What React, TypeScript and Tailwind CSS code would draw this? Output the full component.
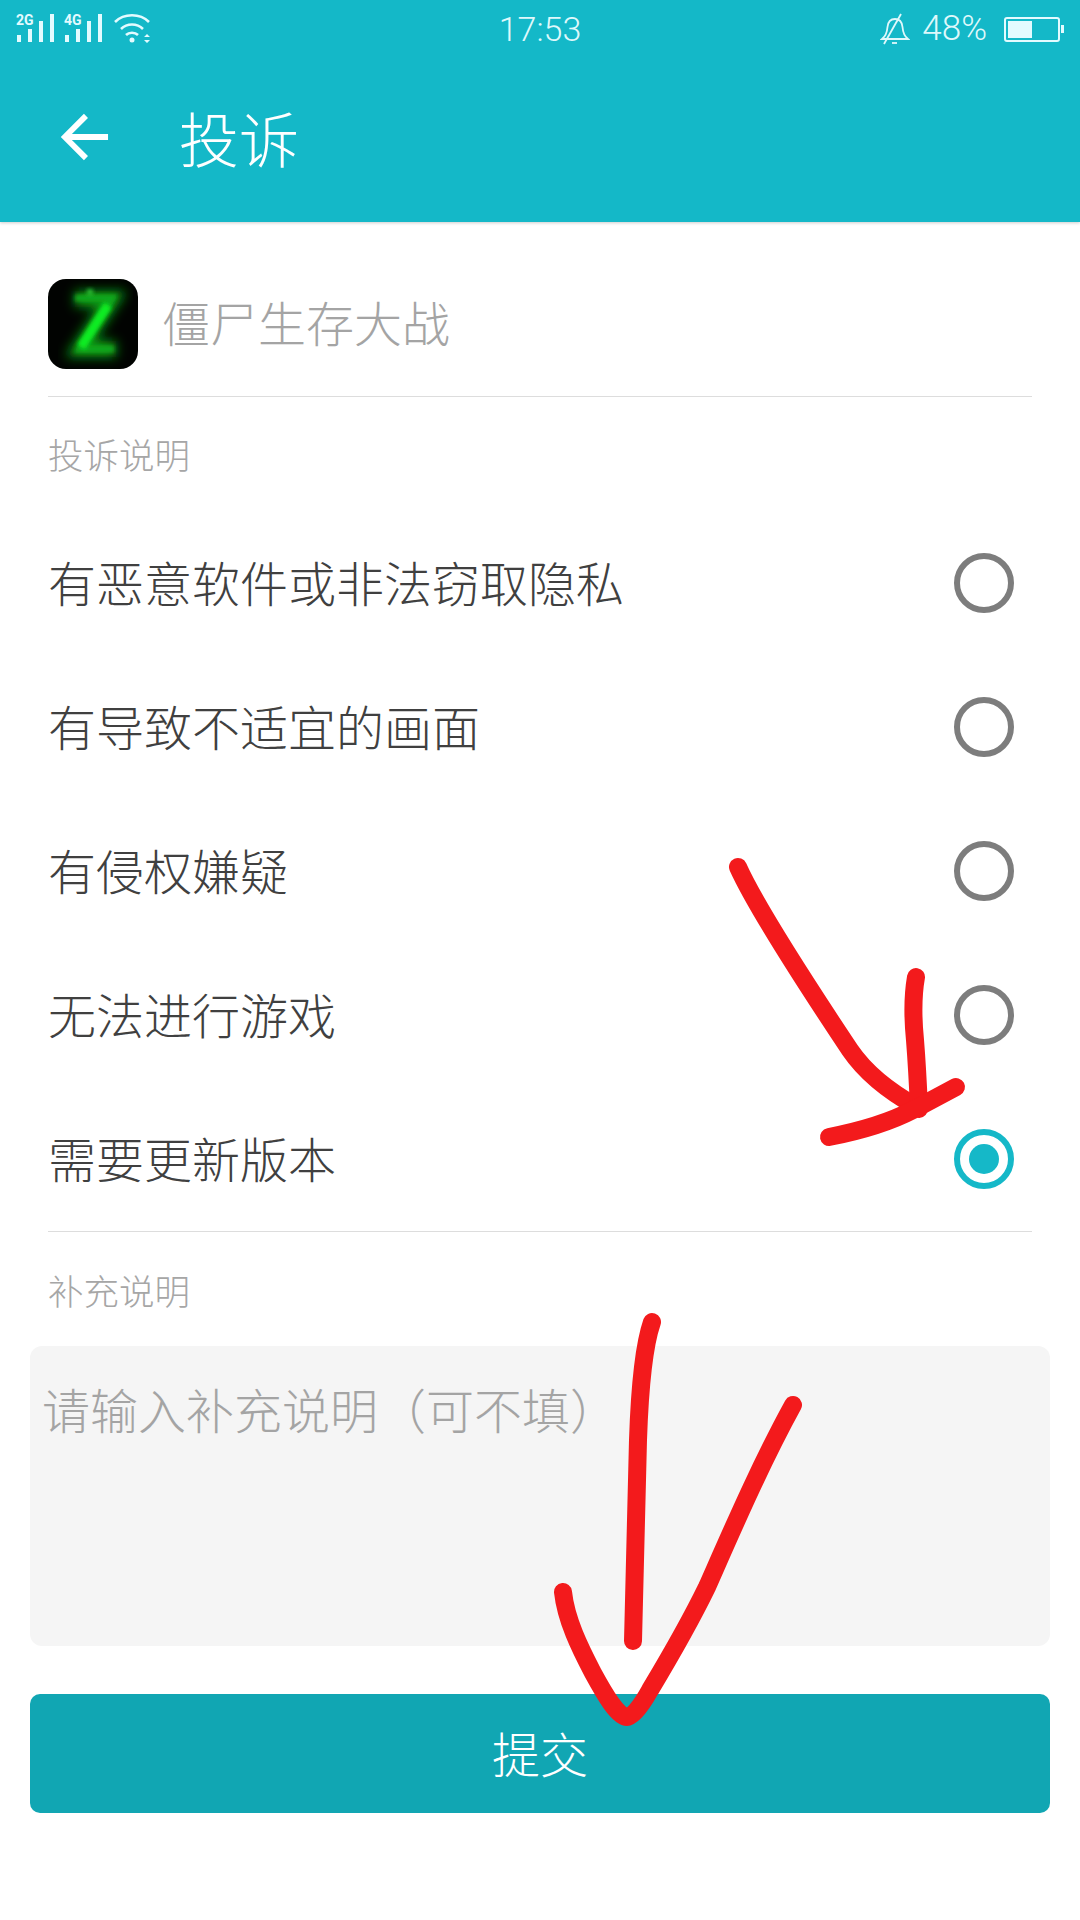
const cjk = { fontFamily: '"Noto Sans CJK SC", "Noto Sans", sans-serif' };

function Signal({ label }: { label: string }) {
  return (
    <div className="relative w-[40px] h-[30px]">
      <span className="absolute left-0 top-0 text-[14px] leading-[13px] font-bold text-[#e3fbff]" style={{ fontFamily: '"Roboto", sans-serif' }}>{label}</span>
      <svg width="40" height="30" viewBox="0 0 40 30" className="absolute left-0 top-0" fill="#e3fbff">
        <rect x="1" y="21" width="4" height="7" />
        <rect x="12" y="15" width="4" height="13" />
        <rect x="23" y="7" width="4" height="21" />
        <rect x="34" y="0" width="4" height="28" />
      </svg>
    </div>
  );
}

function Radio({ on }: { on?: boolean }) {
  return (
    <div className={`w-[60px] h-[60px] rounded-full border-[6px] flex items-center justify-center ${on ? 'border-[#15b8c8]' : 'border-[#7d7d7d]'}`}>
      {on && <div className="w-[30px] h-[30px] rounded-full bg-[#15b8c8]" />}
    </div>
  );
}

const options = ['有恶意软件或非法窃取隐私', '有导致不适宜的画面', '有侵权嫌疑', '无法进行游戏', '需要更新版本'];

export default function App() {
  return (
    <div className="relative w-[1080px] h-[1920px] bg-white overflow-hidden" style={cjk}>
      <header className="h-[222px] bg-[#14b8c8] shadow-[0_1px_3px_rgba(0,0,0,0.2)] flex flex-col">
        <div className="h-[58px] pl-[16px] pr-[16px] flex items-center justify-between">
          <div className="flex items-center w-[300px]">
            <Signal label="2G" />
            <div className="w-[8px]" />
            <Signal label="4G" />
            <svg width="40" height="32" viewBox="0 0 40 32" className="ml-[9px] -mt-[2px]" fill="none" stroke="#e3fbff" strokeWidth="2.6">
              <path d="M2 10C11 1 27 1 36 10" />
              <path d="M8 17C14 11 24 11 30 17" />
              <path d="M13 23C16 20 22 20 25 23" />
              <circle cx="19" cy="28" r="2.5" fill="#e3fbff" stroke="none" />
              <path d="M31 25l3-3 3 3zM31 28l3 3 3-3z" fill="#e3fbff" stroke="none" />
            </svg>
          </div>
          <div className="text-[34px] font-light text-[#dff8fb] w-[84px] text-center" style={{ fontFamily: '"Roboto", sans-serif' }}>17:53</div>
          <div className="flex items-center justify-end w-[300px]">
            <svg width="30" height="32" viewBox="0 0 30 32" fill="none" stroke="#dff8fb" strokeWidth="1.8">
              <path d="M2 26c4-3 5-6 5.500-12C8 9 11 6 15 6s7 3 7.500 8c.5 6 1.500 9 5.500 12z" />
              <path d="M4 31L21 1" />
              <path d="M12 30h5" />
            </svg>
            <span className="ml-[12px] text-[35px] font-light text-[#dff8fb]" style={{ fontFamily: '"Roboto", sans-serif' }}>48%</span>
            <div className="ml-[17px] w-[56px] h-[25px] border-2 border-[#e3fbff] rounded-[3px] p-[2px]">
              <div className="w-[24px] h-full bg-[#e3fbff]" />
            </div>
            <div className="ml-[1px] w-[3px] h-[8px] bg-[#e3fbff]" />
          </div>
        </div>
        <div className="flex items-center pl-[60px] h-[164px] pb-[6px]">
          <svg width="50" height="48" viewBox="0 0 52 50" fill="none" stroke="#ffffff" strokeWidth="6">
            <path d="M50 25H5" />
            <path d="M27 3L5 25l22 22" />
          </svg>
          <div className="ml-[69px] text-[60px] leading-none text-white font-light">投诉</div>
        </div>
      </header>

      <div className="mx-[48px] h-[175px] border-b border-[#dddddd] pt-[57px] flex items-start">
        <svg width="90" height="90" viewBox="0 0 90 90" className="shrink-0">
          <defs>
            <clipPath id="ic"><rect width="90" height="90" rx="18" /></clipPath>
            <filter id="gl" x="-40%" y="-40%" width="180%" height="180%"><feGaussianBlur stdDeviation="6" /></filter>
            <filter id="gs" x="-40%" y="-40%" width="180%" height="180%"><feGaussianBlur stdDeviation="2" /></filter>
          </defs>
          <g clipPath="url(#ic)">
            <rect width="90" height="90" fill="#010301" />
            <path d="M27 20H64L32 70H68" fill="none" stroke="#0c9a16" strokeWidth="16" filter="url(#gl)" />
            <path d="M27 19H64L32 70H66" fill="none" stroke="#0fa81a" strokeWidth="7" filter="url(#gs)" />
            <path d="M60 26L33 68" fill="none" stroke="#10ee22" strokeWidth="9" filter="url(#gs)" />
            <path d="M36 72H62" fill="none" stroke="#12c020" strokeWidth="9" filter="url(#gs)" />
            <circle cx="42" cy="13" r="3" fill="#30d03a" filter="url(#gs)" />
          </g>
        </svg>
        <div className="ml-[24px] h-[90px] -mt-[3px] flex items-center text-[48px] font-light text-[#a4a4a4]">僵尸生存大战</div>
      </div>

      <div className="px-[48px] h-[71px] pt-[35px] text-[35.5px] leading-[44px] font-light text-[#a6a6a6]">投诉说明</div>

      <div className="pt-[43px]">
        {options.map((t, i) => (
          <div key={t} className="h-[144px] pl-[48px] pr-[66px] flex items-center justify-between">
            <span className="text-[48px] pb-[4px] font-light text-[#404040]">{t}</span>
            <Radio on={i === 4} />
          </div>
        ))}
      </div>

      <div className="mx-[48px] border-b border-[#dddddd]" />

      <div className="px-[48px] pt-[36px] text-[35.5px] leading-[44px] font-light text-[#a6a6a6]">补充说明</div>

      <div className="mx-[30px] mt-[34px] h-[300px] bg-[#f5f5f5] rounded-[12px] px-[12px] pt-[26px] text-[48px] leading-[72px] font-light text-[#a4a4a4]">请输入补充说明（可不填）</div>

      <div className="mx-[30px] mt-[48px] h-[119px] bg-[#11a6b3] rounded-[10px] flex items-center justify-center pb-[3px] text-[48px] font-light text-white">提交</div>

      <svg width="1080" height="1920" viewBox="0 0 1080 1920" className="absolute left-0 top-0 pointer-events-none" fill="none" stroke="#f31a1c" strokeWidth="18" strokeLinecap="round" strokeLinejoin="round">
        <path d="M738 867C755 905 800 975 850 1050C865 1072 890 1092 917 1107" />
        <path d="M916 977C912 1000 913 1020 915 1040C917 1065 918 1085 919 1109" />
        <path d="M829 1137C865 1130 890 1122 913 1110L956 1087" />
        <path d="M652 1322C644 1345 640 1380 638 1440C636 1500 635 1560 633 1641" />
        <path d="M793 1405C760 1465 730 1535 707 1587C690 1622 665 1665 650 1690C640 1708 632 1717 627 1717C618 1717 605 1695 593 1673C580 1648 566 1620 563 1592" />
      </svg>
    </div>
  );
}
